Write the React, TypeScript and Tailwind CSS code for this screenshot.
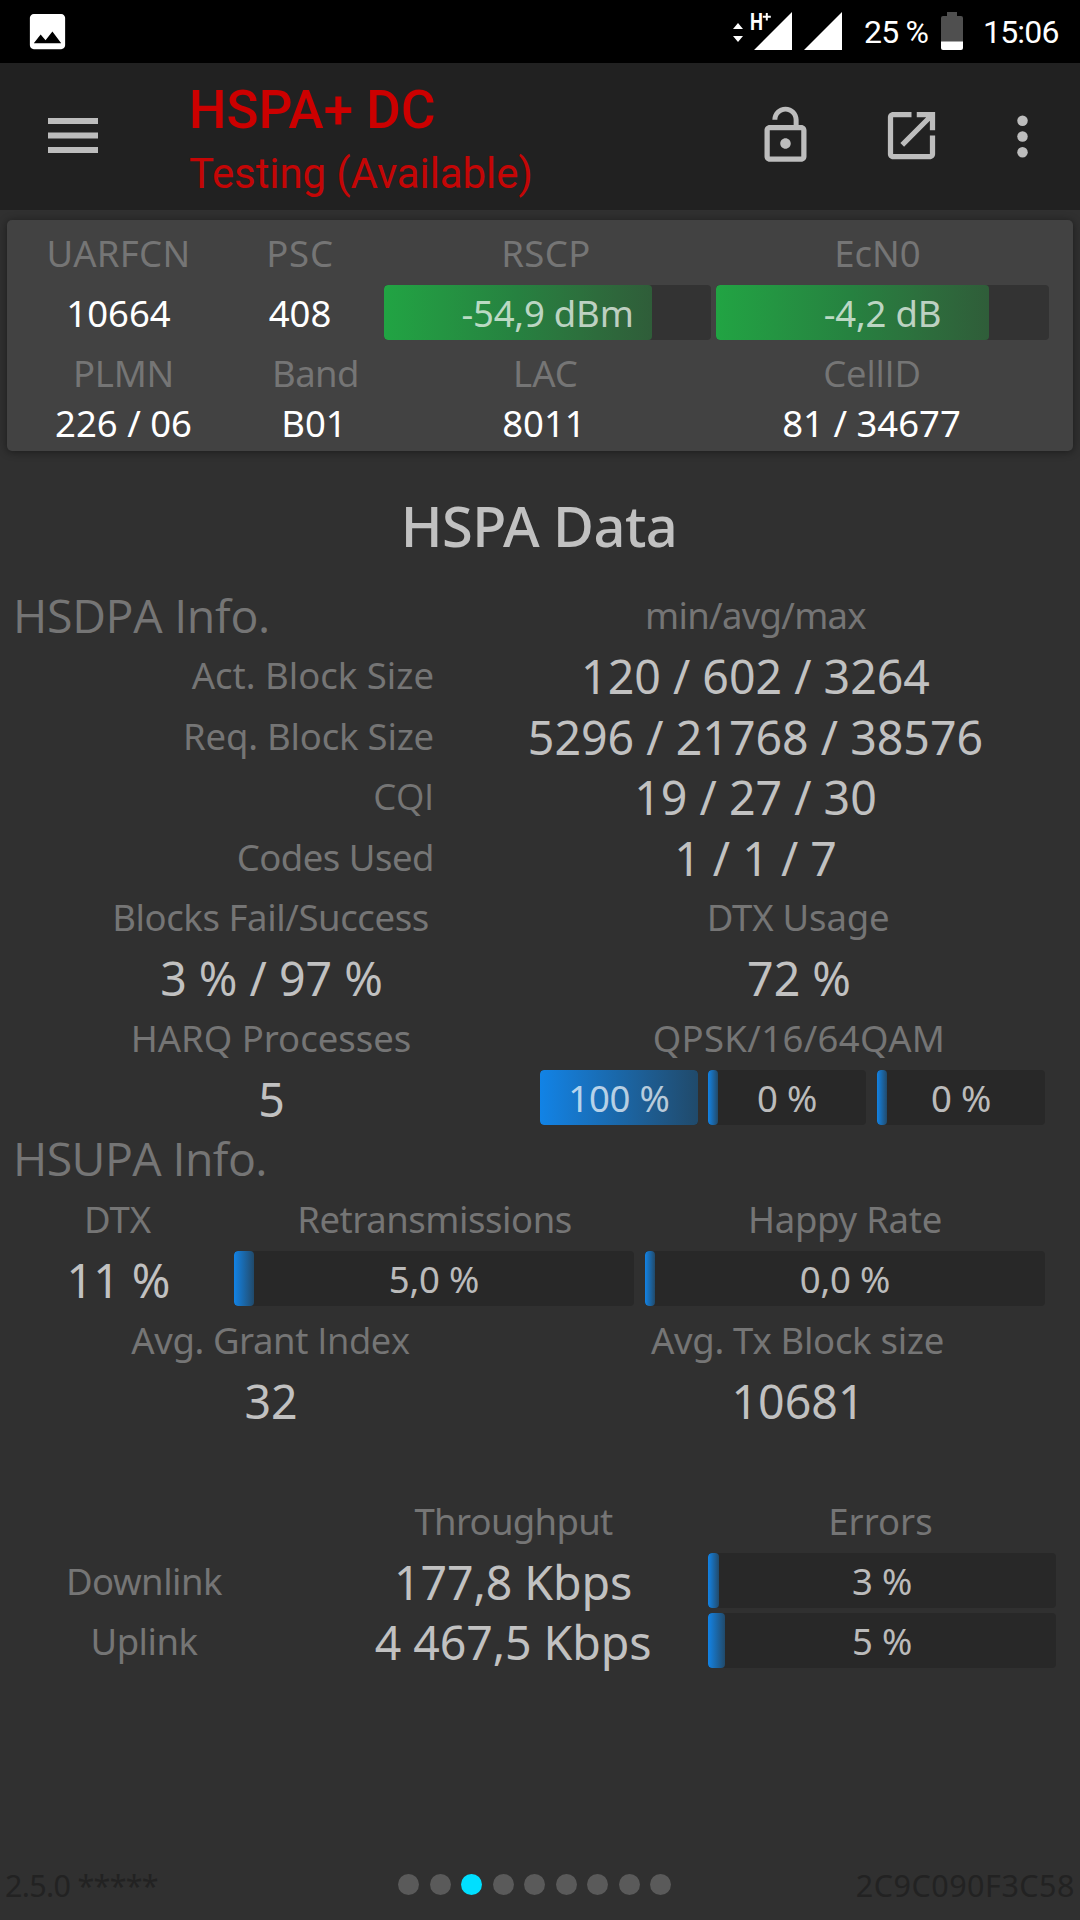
import type { ReactNode } from 'react';
import clsx from 'clsx';

const tones = {
    green: 'from-[#21a443] via-[#268140] to-[#2f5d39]',
    blue: 'from-[#1183e6] via-[#1a67a8] to-[#204a6b]',
};

// widths are in px so the fill keeps its minimum sliver at 0 %
function Meter({ value, width, fill, tone = 'blue', onCard = false }: {
    value: string;
    width: number;
    fill: number;
    tone?: keyof typeof tones;
    onCard?: boolean;
}) {
    return (
        <div
            className={clsx('relative mb-[2px] h-[55px] shrink-0 overflow-hidden rounded-[4px] text-center leading-[57px] tracking-[-0.2px] text-white/70', onCard ? 'bg-[#333333]' : 'bg-[#282828]')}
            style={{ width }}
        >
            <div className={clsx('absolute inset-y-0 left-0 rounded-[4px] bg-linear-to-r', tones[tone])} style={{ width: fill }} />
            <span className="relative">{value}</span>
        </div>
    );
}

function Row({ children, className }: { children?: ReactNode; className?: string }) {
    return <div className={clsx('flex h-[60.375px] items-center whitespace-nowrap leading-[60.375px]', className)}>{children}</div>;
}

function Label({ children, className }: { children: ReactNode; className?: string }) {
    return <div className={clsx('shrink-0 text-center text-[#757575]', className)}>{children}</div>;
}

function Value({ children, className }: { children: ReactNode; className?: string }) {
    return <div className={clsx('shrink-0 pt-[2px] text-center text-[46.5px] text-[#c1c1c1]', className)}>{children}</div>;
}

function StatusBar() {
    return (
        <div className="flex h-[63px] items-center justify-between bg-black pl-[24px] pr-[20px] font-[Roboto] text-[32px] text-white">
            <svg className="size-[47px]" viewBox="0 0 24 24" fill="currentColor">
                <path d="M21 19V5c0-1.1-.9-2-2-2H5c-1.1 0-2 .9-2 2v14c0 1.1.9 2 2 2h14c1.1 0 2-.9 2-2zM8.5 13.5l2.5 3.01L14.5 12l4.5 6H5l3.5-4.5z" />
            </svg>
            <div className="flex items-center">
                <svg className="mr-[21px] h-[63px] w-[112px]" viewBox="0 0 112 63" fill="currentColor">
                    <path d="M2 29l5-6 5 6zM2 36h10l-5 6z" />
                    <path d="M61 12v38H23zM111 12v38H73z" />
                    <text x="19" y="30" fontSize="24" fontWeight="700" textLength="13" lengthAdjust="spacingAndGlyphs">H</text>
                    <path d="M34.800 13h2v2.800h3v2h-3v2.800h-2v-2.800h-3v-2h3z" />
                </svg>
                <span className="w-[77px] pt-px tracking-[-0.8px]">25 %</span>
                <svg className="mr-[20px] h-[63px] w-[22px]" viewBox="0 0 22 63">
                    <path d="M6 12h10v4h4a2 2 0 0 1 2 2v24H0V18a2 2 0 0 1 2-2h4z" fill="#4f4f4f" />
                    <path d="M0 41.500h22V48a2 2 0 0 1-2 2H2a2 2 0 0 1-2-2z" fill="#fff" />
                </svg>
                <span className="w-[77px] tracking-[-0.8px]">15:06</span>
            </div>
        </div>
    );
}

function Toolbar() {
    return (
        <div className="flex h-[147px] items-center bg-[#212121] pl-[48px] pr-[26px] text-[#bdbdbd]">
            <svg className="mb-[2px] h-[35px] w-[50px]" viewBox="0 0 50 35" fill="currentColor">
                <path d="M0 0h50v6H0zM0 14.500h50v6H0zM0 29h50v6H0z" />
            </svg>
            <div className="ml-[91px] grow whitespace-nowrap pt-[9px] font-[Roboto] text-[#cc0000]">
                <div className="text-[53px] leading-[65px] font-medium">HSPA+ DC</div>
                <div className="text-[42px] leading-[62px] tracking-[-0.1px] text-[#c40606]">Testing (Available)</div>
            </div>
            <svg className="mr-[63px] mb-[2px] size-[63px]" viewBox="0 0 24 24" fill="currentColor">
                <path d="M12 17c1.1 0 2-.9 2-2s-.9-2-2-2-2 .9-2 2 .9 2 2 2zm6-9h-1V6c0-2.760-2.240-5-5-5S7 3.240 7 6h1.900c0-1.710 1.390-3.100 3.100-3.100 1.710 0 3.100 1.390 3.100 3.100v2H6c-1.100 0-2 .9-2 2v10c0 1.100.9 2 2 2h12c1.100 0 2-.9 2-2V10c0-1.100-.9-2-2-2zm0 12H6V10h12v10z" />
            </svg>
            <svg className="mr-[48px] mb-[2px] size-[63px]" viewBox="0 0 24 24" fill="currentColor">
                <path d="M19 19H5V5h7V3H5c-1.110 0-2 .9-2 2v14c0 1.100.89 2 2 2h14c1.100 0 2-.9 2-2v-7h-2v7zM14 3v2h3.590l-9.830 9.830 1.410 1.410L19 6.410V10h2V3h-7z" />
            </svg>
            <svg className="mb-px size-[63px]" viewBox="0 0 24 24" fill="currentColor">
                <circle cx="12" cy="6" r="2" />
                <circle cx="12" cy="12" r="2" />
                <circle cx="12" cy="18" r="2" />
            </svg>
        </div>
    );
}

function CellCard() {
    return (
        <div className="mx-[7px] mt-[10px] h-[231px] rounded-[5px] bg-[#424242] pt-[3px] whitespace-nowrap text-white shadow-[0_1px_8px_rgba(0,0,0,0.45)]">
            <div className="flex h-[60px] items-center">
                <Label className="w-[223px] tracking-[0.3px]">UARFCN</Label>
                <Label className="w-[140px] tracking-[0.8px]">PSC</Label>
                <Label className="ml-[7px] w-[338px] tracking-[0.4px]">RSCP</Label>
                <Label className="w-[325px]">EcN0</Label>
            </div>
            <div className="flex h-[60px] items-center">
                <div className="w-[223px] pt-px text-center">10664</div>
                <div className="w-[140px] pt-px text-center">408</div>
                <div className="ml-[14px] flex gap-[5px]">
                    <Meter value="-54,9 dBm" width={327} fill={268} tone="green" onCard />
                    <Meter value="-4,2 dB" width={333} fill={273} tone="green" onCard />
                </div>
            </div>
            <div className="flex h-[60px] items-center">
                <Label className="w-[233px] tracking-[-0.3px]">PLMN</Label>
                <Label className="w-[151px] tracking-[-0.6px]">Band</Label>
                <Label className="w-[309px]">LAC</Label>
                <Label className="w-[344px] font-['Open_Sans'] tracking-[-0.2px]">CellID</Label>
            </div>
            <div className="flex h-[40px] items-center pt-px">
                <div className="w-[233px] text-center">226 / 06</div>
                <div className="w-[148px] text-center">B01</div>
                <div className="w-[312px] text-center">8011</div>
                <div className="w-[343px] text-center">81 / 34677</div>
            </div>
        </div>
    );
}

const blockStats = [
    { label: 'Act. Block Size', value: '120 / 602 / 3264', style: 'tracking-normal' },
    { label: 'Req. Block Size', value: '5296 / 21768 / 38576', style: 'tracking-[-0.2px]' },
    { label: 'CQI', value: '19 / 27 / 30', style: "font-['Open_Sans'] tracking-[-0.3px]" },
    { label: 'Codes Used', value: '1 / 1 / 7', style: 'tracking-[-0.5px]' },
];

const links = [
    { label: 'Downlink', value: '177,8 Kbps', errors: '3 %', fill: 11 },
    { label: 'Uplink', value: '4 467,5 Kbps', errors: '5 %', fill: 17 },
];

export default function App() {
    return (
        <div className="flex h-[1920px] w-[1080px] flex-col overflow-hidden bg-[#303030] font-['Noto_Sans',sans-serif] text-[36.5px]">
            <StatusBar />
            <Toolbar />
            <CellCard />

            <h1 className="mt-[34px] h-[100px] pr-[2px] text-center text-[56px] leading-[80px] font-medium tracking-[-0.6px] text-[#c1c1c1]">HSPA Data</h1>

            <Row>
                <Label className="w-[460px] pl-[13px] text-left font-['Open_Sans'] text-[46.5px] tracking-[-0.3px]">HSDPA Info.</Label>
                <Label className="w-[591px] tracking-[-0.7px]">min/avg/max</Label>
            </Row>
            {blockStats.map((stat) => (
                <Row key={stat.label}>
                    <Label className={clsx('w-[460px] pr-[26px] text-right', stat.style)}>{stat.label}</Label>
                    <Value className="w-[591px]">{stat.value}</Value>
                </Row>
            ))}
            <Row>
                <Label className="w-[541px] tracking-[-0.4px]">Blocks Fail/Success</Label>
                <Label className="w-[514px] tracking-[-0.2px]">DTX Usage</Label>
            </Row>
            <Row>
                <Value className="w-[543px]">3 % / 97 %</Value>
                <Value className="w-[512px]">72 %</Value>
            </Row>
            <Row>
                <Label className="w-[542px]">HARQ Processes</Label>
                <Label className="w-[514px] tracking-[0.35px]">QPSK/16/64QAM</Label>
            </Row>
            <Row>
                <Value className="w-[540px] pl-[3px]">5</Value>
                <Meter value="100 %" width={158} fill={158} />
                <div className="ml-[10px] flex gap-[11px]">
                    <Meter value="0 %" width={158} fill={10} />
                    <Meter value="0 %" width={168} fill={10} />
                </div>
            </Row>
            <Row>
                <Label className="pl-[13px] font-['Open_Sans'] text-[46.5px] tracking-[-0.6px]">HSUPA Info.</Label>
            </Row>
            <Row>
                <Label className="w-[235px]">DTX</Label>
                <Label className="w-[399px] tracking-[-0.45px]">Retransmissions</Label>
                <Label className="w-[422px] tracking-[-0.25px]">Happy Rate</Label>
            </Row>
            <Row>
                <Value className="w-[234px] pl-[3px]">11 %</Value>
                <div className="flex gap-[11px]">
                    <Meter value="5,0 %" width={400} fill={20} />
                    <Meter value="0,0 %" width={400} fill={10} />
                </div>
            </Row>
            <Row>
                <Label className="w-[541px] tracking-[-0.4px]">Avg. Grant <span className="font-['Open_Sans']">Index</span></Label>
                <Label className="w-[513px] tracking-[-0.3px]">Avg. Tx Block size</Label>
            </Row>
            <Row>
                <Value className="w-[542px]">32</Value>
                <Value className="w-[512px]">10681</Value>
            </Row>
            <Row />
            <Row>
                <Label className="ml-[320px] w-[387px] tracking-[-0.7px]">Throughput</Label>
                <Label className="w-[347px]">Errors</Label>
            </Row>
            {links.map((link) => (
                <Row key={link.label}>
                    <Label className="w-[288px] tracking-[-0.5px]">{link.label}</Label>
                    <Value className="ml-[32px] w-[388px] pr-[2px] tracking-[-0.1px]">{link.value}</Value>
                    <Meter value={link.errors} width={348} fill={link.fill} />
                </Row>
            ))}

            <div className="mt-auto mb-[15px] flex h-[41px] items-center text-[30.5px] leading-[41px] text-[#222222]">
                <span className="w-[398px] pt-[2px] pl-[5px] tracking-[-0.7px]">2.5.0 *****</span>
                <div className="flex gap-[10.500px]">
                    {Array.from({ length: 9 }, (_, i) => (
                        <span key={i} className={clsx('size-[21px] rounded-full', i === 2 ? 'bg-[#00dfff]' : 'bg-[#5a5a5a]')} />
                    ))}
                </div>
                <span className="grow pt-[2px] pr-[5px] text-right tracking-[0.5px]">2C9C090F3C58</span>
            </div>
        </div>
    );
}
